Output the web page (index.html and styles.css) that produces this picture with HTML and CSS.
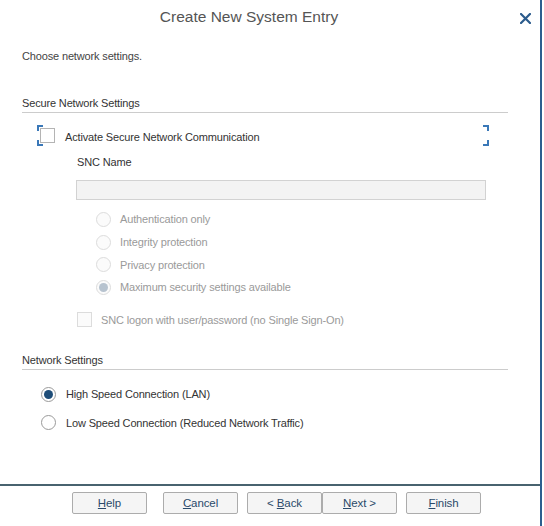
FILE: index.html
```html
<!DOCTYPE html>
<html>
<head>
<meta charset="utf-8">
<link rel="stylesheet" href="styles.css">
</head>
<body>
<div class="dialog">
  <div class="header">
    <div class="title">Create New System Entry</div>
    <div class="close">
      <svg width="11" height="11" viewBox="0 0 11 11"><path d="M1 1 L10 10 M10 1 L1 10" stroke="#2b5b8c" stroke-width="2.2" stroke-linecap="square"/></svg>
    </div>
  </div>
  <div class="content">
    <div class="intro">Choose network settings.</div>

    <div class="section-title first">Secure Network Settings</div>
    <div class="focus-row">
      <span class="corner tl"></span><span class="corner bl"></span>
      <span class="corner tr"></span><span class="corner br"></span>
      <span class="checkbox"></span>
      <span class="label">Activate Secure Network Communication</span>
    </div>
    <div class="snc-label">SNC Name</div>
    <div class="snc-input"></div>

    <div class="radio-group disabled">
      <div class="radio-row"><span class="radio"></span><span class="label">Authentication only</span></div>
      <div class="radio-row"><span class="radio"></span><span class="label">Integrity protection</span></div>
      <div class="radio-row"><span class="radio"></span><span class="label">Privacy protection</span></div>
      <div class="radio-row"><span class="radio checked"></span><span class="label">Maximum security settings available</span></div>
    </div>

    <div class="check-row disabled"><span class="checkbox"></span><span class="label">SNC logon with user/password (no Single Sign-On)</span></div>

    <div class="section-title second">Network Settings</div>
    <div class="net-group">
      <div class="radio-row"><span class="radio checked"></span><span class="label">High Speed Connection (LAN)</span></div>
      <div class="radio-row"><span class="radio"></span><span class="label">Low Speed Connection (Reduced Network Traffic)</span></div>
    </div>
  </div>
  <div class="footer">
    <button class="btn help"><u>H</u>elp</button>
    <button class="btn cancel"><u>C</u>ancel</button>
    <button class="btn back">&lt; <u>B</u>ack</button>
    <button class="btn next"><u>N</u>ext &gt;</button>
    <button class="btn finish"><u>F</u>inish</button>
  </div>
</div>
</body>
</html>
```

FILE: styles.css
```css
html, body {
  margin: 0;
  padding: 0;
  background: #ffffff;
}

.dialog {
  width: 540px;
  height: 526px;
  border-right: 2px solid #2d5f8f;
  display: flex;
  flex-direction: column;
  font-family: "Liberation Sans", Arial, sans-serif;
  font-size: 11px;
  letter-spacing: -0.15px;
  color: #333333;
  background: #ffffff;
}

.header {
  height: 35px;
  display: flex;
  align-items: center;
}

.title {
  width: 498px;
  text-align: center;
  font-size: 15.5px;
  letter-spacing: 0;
  color: #555555;
  padding-bottom: 2px;
}

.close {
  flex: 1;
  display: flex;
  align-items: center;
  padding-left: 22px;
  padding-top: 1px;
}

.close svg {
  display: block;
}

.content {
  flex: 1;
  padding: 0 32px 0 22px;
  display: flex;
  flex-direction: column;
}

.intro {
  margin-top: 12px;
  height: 18px;
  line-height: 18px;
  color: #444444;
}

.section-title {
  height: 18px;
  line-height: 18px;
  border-bottom: 1px solid #cccccc;
  color: #333333;
}

.section-title.first {
  margin-top: 29px;
}

.section-title.second {
  margin-top: 23px;
}

.focus-row {
  position: relative;
  margin-top: 12px;
  margin-left: 15px;
  width: 452px;
  height: 21px;
  display: flex;
  align-items: center;
}

.focus-row .label {
  padding-top: 2px;
}

.corner {
  position: absolute;
  width: 4px;
  height: 4px;
  border-color: #3a78b8;
  border-style: solid;
  border-width: 0;
}
.corner.tl { left: 0; top: 0; border-left-width: 2px; border-top-width: 2px; }
.corner.bl { left: 0; bottom: 0; border-left-width: 2px; border-bottom-width: 2px; }
.corner.tr { right: 0; top: 0; border-right-width: 2px; border-top-width: 2px; }
.corner.br { right: 0; bottom: 0; border-right-width: 2px; border-bottom-width: 2px; }

.checkbox {
  width: 13px;
  height: 13px;
  border: 1px solid #b4b4b4;
  background: #ffffff;
  flex: none;
}

.focus-row .checkbox {
  margin-left: 3px;
  margin-right: 10px;
}

.snc-label {
  margin-top: 7px;
  margin-left: 55px;
  height: 18px;
  line-height: 18px;
}

.snc-input {
  margin-top: 9px;
  margin-left: 54px;
  width: 408px;
  height: 18px;
  border: 1px solid #d2d2d2;
  background: #f3f3f3;
}

.radio-group {
  margin-top: 8px;
  margin-left: 74px;
}

.radio-row {
  height: 22.7px;
  display: flex;
  align-items: center;
}

.radio {
  width: 13px;
  height: 13px;
  border-radius: 50%;
  border: 1px solid #9a9a9a;
  background: #ffffff;
  flex: none;
  margin-right: 9px;
  display: flex;
  align-items: center;
  justify-content: center;
}

.radio.checked::after {
  content: "";
  width: 9px;
  height: 9px;
  border-radius: 50%;
  background: #1f4e79;
}

.disabled {
  color: #9a9a9a;
}

.disabled .radio {
  border-color: #dcdcdc;
  background: #fbfbfb;
}

.disabled .radio.checked::after {
  background: #b7c3cf;
}

.disabled .checkbox {
  border-color: #dcdcdc;
  background: #fbfbfb;
}

.check-row {
  margin-top: 13px;
  margin-left: 55px;
  height: 16px;
  display: flex;
  align-items: center;
}

.check-row .checkbox {
  margin-right: 9px;
}

.net-group {
  margin-top: 10px;
  margin-left: 19px;
}

.net-group .radio-row {
  height: 28.5px;
}

.net-group .radio {
  margin-right: 10px;
}

.footer {
  height: 42px;
  border-top: 2px solid #48636f;
  display: flex;
  align-items: flex-start;
  padding-top: 6px;
  padding-left: 72px;
  box-sizing: border-box;
}

.btn {
  width: 75px;
  height: 22px;
  border: 1px solid #acacac;
  border-radius: 2px;
  background: #f5f5f5;
  font-family: "Liberation Sans", Arial, sans-serif;
  font-size: 11.5px;
  letter-spacing: -0.1px;
  color: #2b4a6a;
  padding: 0;
  flex: none;
}

.btn u {
  text-decoration: underline;
}

.cancel { margin-left: 16px; }
.back { margin-left: 9px; }
.next { margin-left: 0; }
.finish { margin-left: 9px; }
```
